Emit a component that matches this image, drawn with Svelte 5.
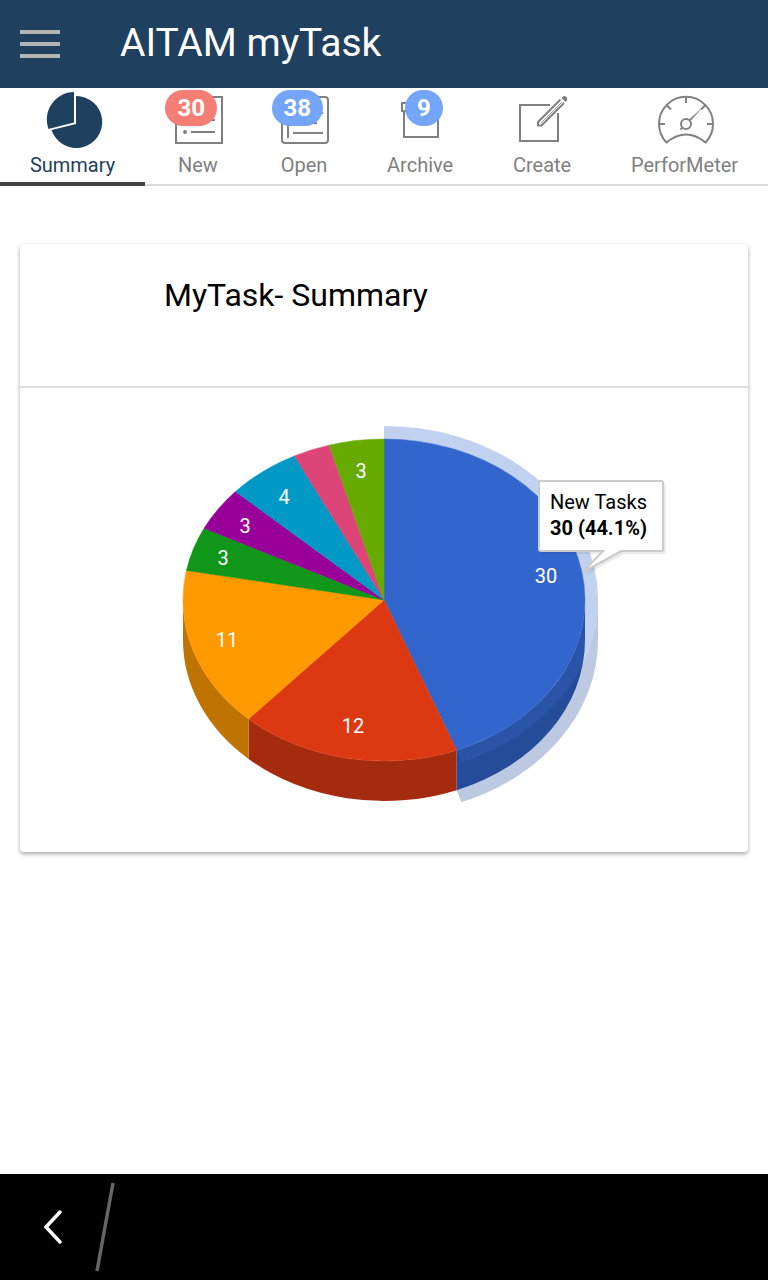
<script>
  const tabs = [
    { id: 'summary', label: 'Summary' },
    { id: 'new', label: 'New', count: 30, tone: 'alert' },
    { id: 'open', label: 'Open', count: 38, tone: 'info' },
    { id: 'archive', label: 'Archive', count: 9, tone: 'info' },
    { id: 'create', label: 'Create' },
    { id: 'meter', label: 'PerforMeter' }
  ];
  let active = $state('summary');

  // Pie geometry, in chart units
  const cx = 364;
  const cy = 212;
  const rx = 201;
  const ry = 161;
  const depth = 40;
  const halo = 13;

  const data = [
    { value: 30, color: '#3366cc', side: '#264d99', at: [526, 195] },
    { value: 12, color: '#dc3912', side: '#a52b0e', at: [333, 345] },
    { value: 11, color: '#ff9900', side: '#bf7300', at: [207, 259] },
    { value: 3, color: '#109618', side: '#0c7012', at: [203, 177] },
    { value: 3, color: '#990099', side: '#730073', at: [225, 145] },
    { value: 4, color: '#0099c6', side: '#007395', at: [264, 116] },
    { value: 2, color: '#dd4477', side: '#a63359' },
    { value: 3, color: '#66aa00', side: '#4c8000', at: [341, 90] }
  ];
  const total = data.reduce((sum, d) => sum + d.value, 0);

  function point(angle, grow = 0, drop = 0) {
    const x = cx + (rx + grow) * Math.sin(angle);
    const y = cy - (ry + grow) * Math.cos(angle) + drop;
    return `${x.toFixed(2)} ${y.toFixed(2)}`;
  }

  let run = 0;
  const slices = data.map((d) => {
    const a = (run / total) * 2 * Math.PI;
    run += d.value;
    const b = (run / total) * 2 * Math.PI;
    const top = `M${cx} ${cy}L${point(a)}A${rx} ${ry} 0 0 1 ${point(b)}Z`;
    // Only the front half of the rim is visible
    const from = Math.max(a, Math.PI / 2);
    const to = Math.min(b, Math.PI * 1.5);
    const wall =
      from < to
        ? `M${point(from)}A${rx} ${ry} 0 0 1 ${point(to)}L${point(to, 0, depth)}A${rx} ${ry} 0 0 0 ${point(from, 0, depth)}Z`
        : '';
    return { ...d, b, top, wall };
  });

  const end = slices[0].b;
  const hx = rx + halo;
  const hy = ry + halo;
  const haloTop = `M${point(0)}L${point(0, halo)}A${hx} ${hy} 0 0 1 ${point(end, halo)}L${point(end)}A${rx} ${ry} 0 0 0 ${point(0)}Z`;
  const haloWall = `M${point(Math.PI / 2, halo)}A${hx} ${hy} 0 0 1 ${point(end, halo)}L${point(end)}L${point(end, 0, depth)}L${point(end, halo, depth)}A${hx} ${hy} 0 0 0 ${point(Math.PI / 2, halo, depth)}Z`;
  const bubble = 'M521 93H641Q643 93 643 95V161Q643 163 641 163H601L563 184L583 163H521Q519 163 519 161V95Q519 93 521 93Z';
</script>

<div class="app">
  <header>
    <button class="menu" aria-label="Menu"><i></i><i></i><i></i></button>
    <h1>AITAM myTask</h1>
  </header>

  <nav>
    {#each tabs as tab (tab.id)}
      <button class="tab" class:active={active === tab.id} onclick={() => (active = tab.id)}>
        <svg class="icon" viewBox="0 0 56 56" aria-hidden="true">
          {#if tab.id === 'summary'}
            <path class="solid" d="M29 0V30.5L3.5 37A27.5 27.5 0 0 1 29 0Z" />
            <path class="solid" d="M31 4A26 26 0 1 1 6.5 38L31 32Z" />
          {:else if tab.id === 'new'}
            <path d="M6 5H52V51H6ZM21 16H45M21 28H45M21 40H45" />
            <circle class="solid" cx="15" cy="16" r="2" />
            <circle class="solid" cx="15" cy="28" r="2" />
            <circle class="solid" cx="15" cy="40" r="2" />
          {:else if tab.id === 'open'}
            <rect x="6" y="5" width="46" height="46" rx="3" />
            <path d="M12 13V46M17 21H47M17 31H41M17 41H47" />
          {:else if tab.id === 'archive'}
            <path d="M10 11H48V19H10ZM12 19V45H46V19" />
          {:else if tab.id === 'create'}
            <path d="M36 13H6V49H44V21" />
            <path d="M46.5 7.5L24 30V33.5H27.5L50 11" />
            <path d="M26.500 31.500L48 10" stroke-width="0.800" />
            <path class="solid" d="M47.500 6Q50 2.500 52.500 5Q54.500 7.500 51.500 10Z" />
          {:else}
            <path d="M9.500 50.500A27 27 0 1 1 48.500 50.500Q29 34.500 9.500 50.500Z" />
            <path d="M29 5V11M2 32H8M50 32H56M9.500 13L14 17.500M48.500 13L44 17.500M25.500 35.500L23.500 37.500" />
            <circle cx="29" cy="32" r="5" />
            <path class="solid" d="M32 27.500L46 15L33.500 29Z" />
          {/if}
        </svg>
        {#if tab.count}<span class="badge {tab.tone}">{tab.count}</span>{/if}
        <span class="label">{tab.label}</span>
      </button>
    {/each}
  </nav>

  <main>
    <section class="card">
      <h2>MyTask- Summary</h2>
      <svg class="chart" viewBox="0 0 728 464" role="img" aria-label="MyTask- Summary">
        {#each slices as s}
          {#if s.wall}<path d={s.wall} fill={s.side} />{/if}
        {/each}
        {#each slices as s}
          <path d={s.top} fill={s.color} stroke={s.color} stroke-width="0.5" />
        {/each}
        <path d={haloWall} fill="#264d99" opacity="0.3" />
        <path d={haloTop} fill="#3366cc" opacity="0.3" />
        {#each slices as s}
          {#if s.at}<text class="value" x={s.at[0]} y={s.at[1]}>{s.value}</text>{/if}
        {/each}
        <g class="tip">
          <path d={bubble} transform="translate(3 3)" fill="#000" opacity="0.08" />
          <path d={bubble} transform="translate(1 1)" fill="#000" opacity="0.12" />
          <path d={bubble} fill="#fff" stroke="#ccc" stroke-width="2" />
          <text x="530" y="121">New Tasks</text>
          <text class="strong" x="530" y="147">30 (44.1%)</text>
        </g>
      </svg>
    </section>
  </main>

  <footer>
    <button class="back" aria-label="Back">
      <svg viewBox="0 0 120 106" aria-hidden="true">
        <path d="M60 38L46 53L60 68" stroke="#fff" stroke-width="3.500" stroke-linecap="round" />
        <path d="M113 9L97 97" stroke="#666" stroke-width="3.500" />
      </svg>
    </button>
  </footer>
</div>

<style>
  :global(body) {
    margin: 0;
    background: #fff;
  }
  .app {
    display: flex;
    flex-direction: column;
    min-height: 100vh;
    font-family: Roboto, sans-serif;
    font-size: 20px;
    color: #000;
  }
  button {
    margin: 0;
    padding: 0;
    border: 0;
    background: none;
    font: inherit;
    color: inherit;
    cursor: pointer;
  }
  h1,
  h2 {
    margin: 0;
    font-weight: 400;
  }
  header {
    display: flex;
    align-items: center;
    gap: 60px;
    height: 88px;
    padding: 0 20px;
    background: #20405f;
    color: #fff;
  }
  .menu {
    display: grid;
    gap: 8px;
    width: 40px;
  }
  .menu i {
    height: 4px;
    background: #b3b3b3;
  }
  h1 {
    padding-bottom: 2px;
    font-size: 39px;
    line-height: 48px;
  }
  nav {
    display: flex;
    height: 98px;
    box-shadow: inset 0 -2px #dcdcdc;
  }
  .tab {
    position: relative;
    display: flex;
    flex: 1 1 auto;
    flex-direction: column;
    align-items: center;
    gap: 4px;
    box-sizing: border-box;
    padding: 4px 29px 0;
    color: #808080;
  }
  .tab.active {
    color: #20405f;
    box-shadow: inset 0 -4px #444;
  }
  .icon {
    width: 56px;
    height: 56px;
    margin: 0 -5px;
    overflow: visible;
    fill: none;
    stroke: currentColor;
    stroke-width: 2;
  }
  .solid {
    fill: currentColor;
    stroke: none;
  }
  .label {
    line-height: 26px;
  }
  .badge {
    position: absolute;
    top: 2px;
    right: 32%;
    padding: 0 12px;
    border-radius: 18px;
    font-size: 24px;
    font-weight: 700;
    line-height: 36px;
    color: #fff;
  }
  .alert {
    background: #f47e76;
  }
  .info {
    background: #75a5f9;
  }
  main {
    flex: 1;
    padding: 58px 20px;
  }
  .card {
    border-radius: 4px;
    box-shadow: 0 2px 4px rgba(0, 0, 0, 0.35);
  }
  h2 {
    padding: 31px 144px 71px;
    border-bottom: 2px solid #dcdcdc;
    font-size: 32px;
    line-height: 40px;
  }
  .chart {
    display: block;
    width: 100%;
  }
  .value {
    fill: #fff;
    text-anchor: middle;
  }
  .strong {
    font-weight: 700;
  }
  footer {
    height: 106px;
    background: #000;
  }
  .back svg {
    display: block;
    width: 120px;
    height: 106px;
    fill: none;
  }
</style>
